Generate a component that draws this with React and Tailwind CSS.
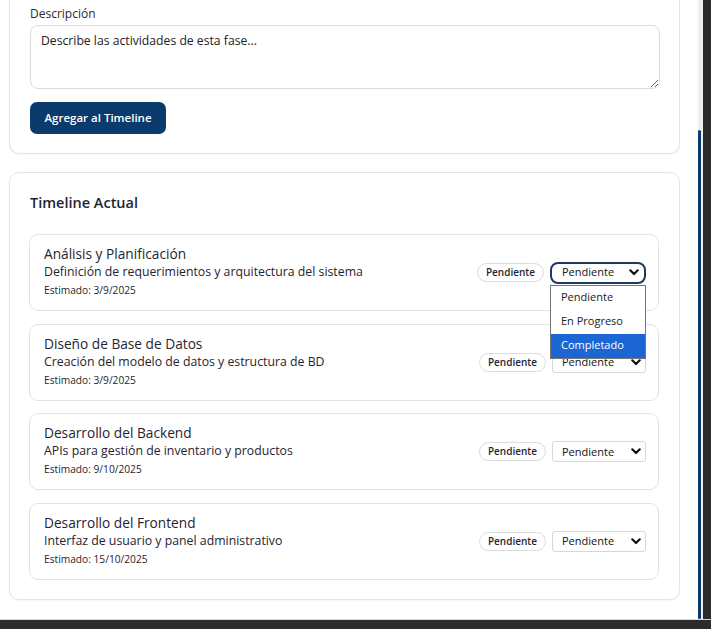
import React from "react";

const items = [
  { t: "Análisis y Planificación", d: "Definición de requerimientos y arquitectura del sistema", e: "Estimado: 3/9/2025", open: true },
  { t: "Diseño de Base de Datos", d: "Creación del modelo de datos y estructura de BD", e: "Estimado: 3/9/2025" },
  { t: "Desarrollo del Backend", d: "APIs para gestión de inventario y productos", e: "Estimado: 9/10/2025" },
  { t: "Desarrollo del Frontend", d: "Interfaz de usuario y panel administrativo", e: "Estimado: 15/10/2025" },
];

function Chevron() {
  return (
    <svg width="10" height="7" viewBox="0 0 10 7" className="shrink-0">
      <path d="M1.3 1.3 L5 5 L8.7 1.3" fill="none" stroke="#111" strokeWidth="2.2" strokeLinecap="round" strokeLinejoin="round" />
    </svg>
  );
}

function Select({ open }) {
  return (
    <div className="relative">
      {open ? (
        <div className="flex items-center justify-between w-[96px] h-[22px] pl-[10px] pr-[5px] rounded-[8px] border-2 border-[#1d3a5e] bg-white">
          <span className="text-[11px] text-[#111]">Pendiente</span>
          <Chevron />
        </div>
      ) : (
        <div className="flex items-center justify-between w-[94px] h-[21px] pl-[9px] pr-[4px] rounded-[3px] border border-[#d4d7dc] bg-white">
          <span className="text-[11px] text-[#111]">Pendiente</span>
          <Chevron />
        </div>
      )}
      {open && (
        <div className="absolute left-0 top-[23px] w-[96px] border border-[#777] bg-white z-10 flex flex-col">
          <div className="h-[24px] flex items-center pl-[10px] text-[11px] text-[#222]">Pendiente</div>
          <div className="h-[24px] flex items-center pl-[10px] text-[11px] text-[#222]">En Progreso</div>
          <div className="h-[24px] flex items-center pl-[10px] text-[11px] text-white bg-[#1b66d2]">Completado</div>
        </div>
      )}
    </div>
  );
}

export default function App() {
  return (
    <div className="w-[711px] h-[629px] bg-[#2b2b2b] overflow-hidden" style={{ fontFamily: '"Open Sans", sans-serif' }}>
      <div className="flex h-[620px] border-b border-[#d8d8d8]">
        <div className="w-[698px] h-full bg-white pl-[9px] flex flex-col">
          <div className="w-[671px] border border-t-0 border-[#e1e4e8] rounded-b-[10px] px-[20px] pt-[5px] pb-[19px] flex flex-col shadow-[0_1px_2px_rgba(0,0,0,0.04)]">
            <label className="text-[12px] text-[#2a2a2a] leading-[18px]">Descripción</label>
            <textarea
              className="mt-[2px] w-[630px] h-[64px] border border-[#d9dce1] rounded-[8px] px-[10px] py-[6px] text-[12.2px] text-[#222] placeholder:text-[#222] outline-none"
              placeholder="Describe las actividades de esta fase..."
            />
            <button className="mt-[13px] w-[136px] h-[32px] rounded-[7px] bg-[#0b3a6d] text-white text-[11.5px] font-semibold">
              Agregar al Timeline
            </button>
          </div>

          <div className="mt-[18px] w-[671px] border border-[#e1e4e8] rounded-[10px] pl-[19px] pr-[20px] pt-[18px] pb-[19px] flex flex-col shadow-[0_1px_2px_rgba(0,0,0,0.04)]">
            <h2 className="pl-[1px] text-[14.5px] font-semibold text-[#1f2430] leading-[24px]">Timeline Actual</h2>
            <div className="mt-[19px] flex flex-col gap-[12.7px]">
              {items.map((it) => (
                <div key={it.t} className="h-[77px] border border-[#dfe2e7] rounded-[9px] pl-[14px] pr-[12px] flex items-center justify-between">
                  <div className="flex flex-col -mt-[2px]">
                    <div className="text-[13.7px] leading-[18px] text-[#1f2430]">{it.t}</div>
                    <div className="text-[12.3px] leading-[18px] text-[#1f2430]">{it.d}</div>
                    <div className="mt-[1px] text-[10.2px] leading-[16px] text-[#1f2430]">{it.e}</div>
                  </div>
                  <div className="flex items-center gap-[6px]">
                    <span className="h-[19px] px-[8px] rounded-full border border-[#d9dce1] flex items-center text-[10px] font-semibold text-[#1f2430]">Pendiente</span>
                    <Select open={it.open} />
                  </div>
                </div>
              ))}
            </div>
          </div>
        </div>
        <div className="w-[5px] h-full bg-[#efefef] pt-[130px] flex">
          <div className="w-[3px] h-full bg-[#0b3a6d] rounded-[2px]" />
        </div>
      </div>
    </div>
  );
}
